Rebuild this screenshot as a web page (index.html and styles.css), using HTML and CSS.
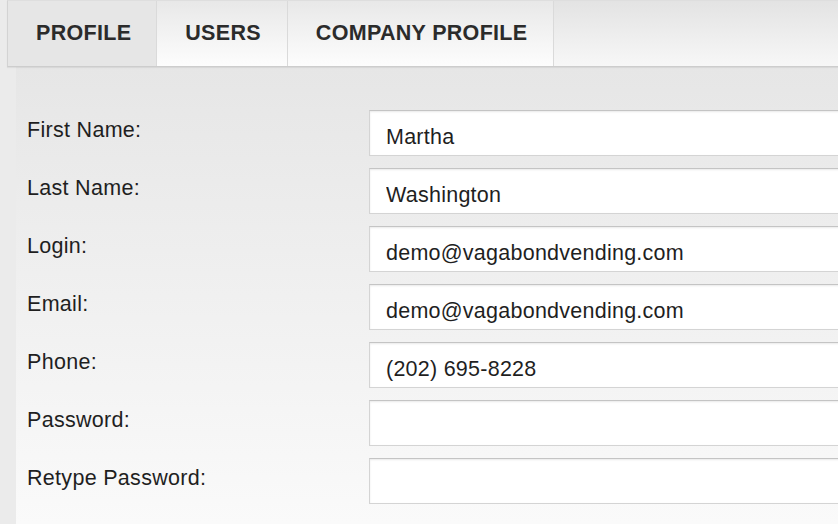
FILE: index.html
```html
<!DOCTYPE html>
<html lang="en">
<head>
<meta charset="utf-8">
<title>Profile</title>
<link rel="stylesheet" href="styles.css">
</head>
<body>
<div class="page">
  <nav class="tabs">
    <a class="tab tab-active" href="#">PROFILE</a>
    <a class="tab" href="#">USERS</a>
    <a class="tab" href="#">COMPANY PROFILE</a>
    <div class="tab-fill"></div>
  </nav>
  <div class="panel">
    <form class="form">
      <div class="row"><label class="label" for="first">First Name:</label><input class="field" id="first" type="text" value="Martha"></div>
      <div class="row"><label class="label" for="last">Last Name:</label><input class="field" id="last" type="text" value="Washington"></div>
      <div class="row"><label class="label" for="login">Login:</label><input class="field" id="login" type="text" value="demo@vagabondvending.com"></div>
      <div class="row"><label class="label" for="email">Email:</label><input class="field" id="email" type="text" value="demo@vagabondvending.com"></div>
      <div class="row"><label class="label" for="phone">Phone:</label><input class="field" id="phone" type="text" value="(202) 695-8228"></div>
      <div class="row"><label class="label" for="pw">Password:</label><input class="field" id="pw" type="password" value=""></div>
      <div class="row"><label class="label" for="pw2">Retype Password:</label><input class="field" id="pw2" type="password" value=""></div>
    </form>
  </div>
</div>
</body>
</html>
```
FILE: styles.css
```css
html, body {
  margin: 0;
  padding: 0;
}

body {
  background: #ebebeb;
  font-family: "Liberation Sans", Arial, Helvetica, sans-serif;
  color: #1f1f1f;
  overflow: hidden;
}

.page {
  width: 838px;
  height: 524px;
  display: flex;
  flex-direction: column;
}

/* tab strip */
.tabs {
  display: flex;
  height: 67px;
  flex-shrink: 0;
  margin-left: 7px;
  border-left: 1px solid #d3d3d3;
  border-top: 1px solid #dedede;
  border-bottom: 1px solid #cdcdcd;
  box-shadow: 0 1px 1px rgba(0, 0, 0, 0.06);
  background: linear-gradient(#e3e3e3, #f7f7f7);
  box-sizing: border-box;
  position: relative;
  z-index: 1;
}

.tab {
  display: flex;
  align-items: center;
  justify-content: center;
  padding: 0 26px 0 28px;
  font-size: 21.5px;
  font-weight: bold;
  letter-spacing: 0.3px;
  color: #2b2b2b;
  text-decoration: none;
  border-right: 1px solid #dadada;
  background: linear-gradient(#e8e8e8, #fdfdfd);
}

.tab-active {
  padding-right: 25px;
  background: #e6e6e6;
}

.tab-fill {
  flex: 1;
}

/* form panel */
.panel {
  flex: 1;
  margin-left: 16px;
  padding-top: 43px;
  background: linear-gradient(#e6e6e6, #fafafa);
}

.form {
  margin: 0;
  display: flex;
  flex-direction: column;
  gap: 12px;
}

.row {
  display: flex;
  align-items: center;
}

.label {
  width: 342px;
  padding-left: 11px;
  margin-bottom: 6px;
  font-size: 21.5px;
  letter-spacing: 0.3px;
  color: #1f1f1f;
  flex-shrink: 0;
}

.field {
  box-sizing: border-box;
  width: 520px;
  height: 46px;
  flex-shrink: 0;
  padding: 8px 16px 0;
  margin: 0;
  border: 1px solid #d4d4d4;
  border-top-color: #c4c4c4;
  box-shadow: inset 0 1px 2px rgba(0, 0, 0, 0.09);
  background: #fff;
  font-family: "Liberation Sans", Arial, Helvetica, sans-serif;
  font-size: 21.5px;
  letter-spacing: 0.25px;
  color: #1f1f1f;
  outline: none;
}
```
